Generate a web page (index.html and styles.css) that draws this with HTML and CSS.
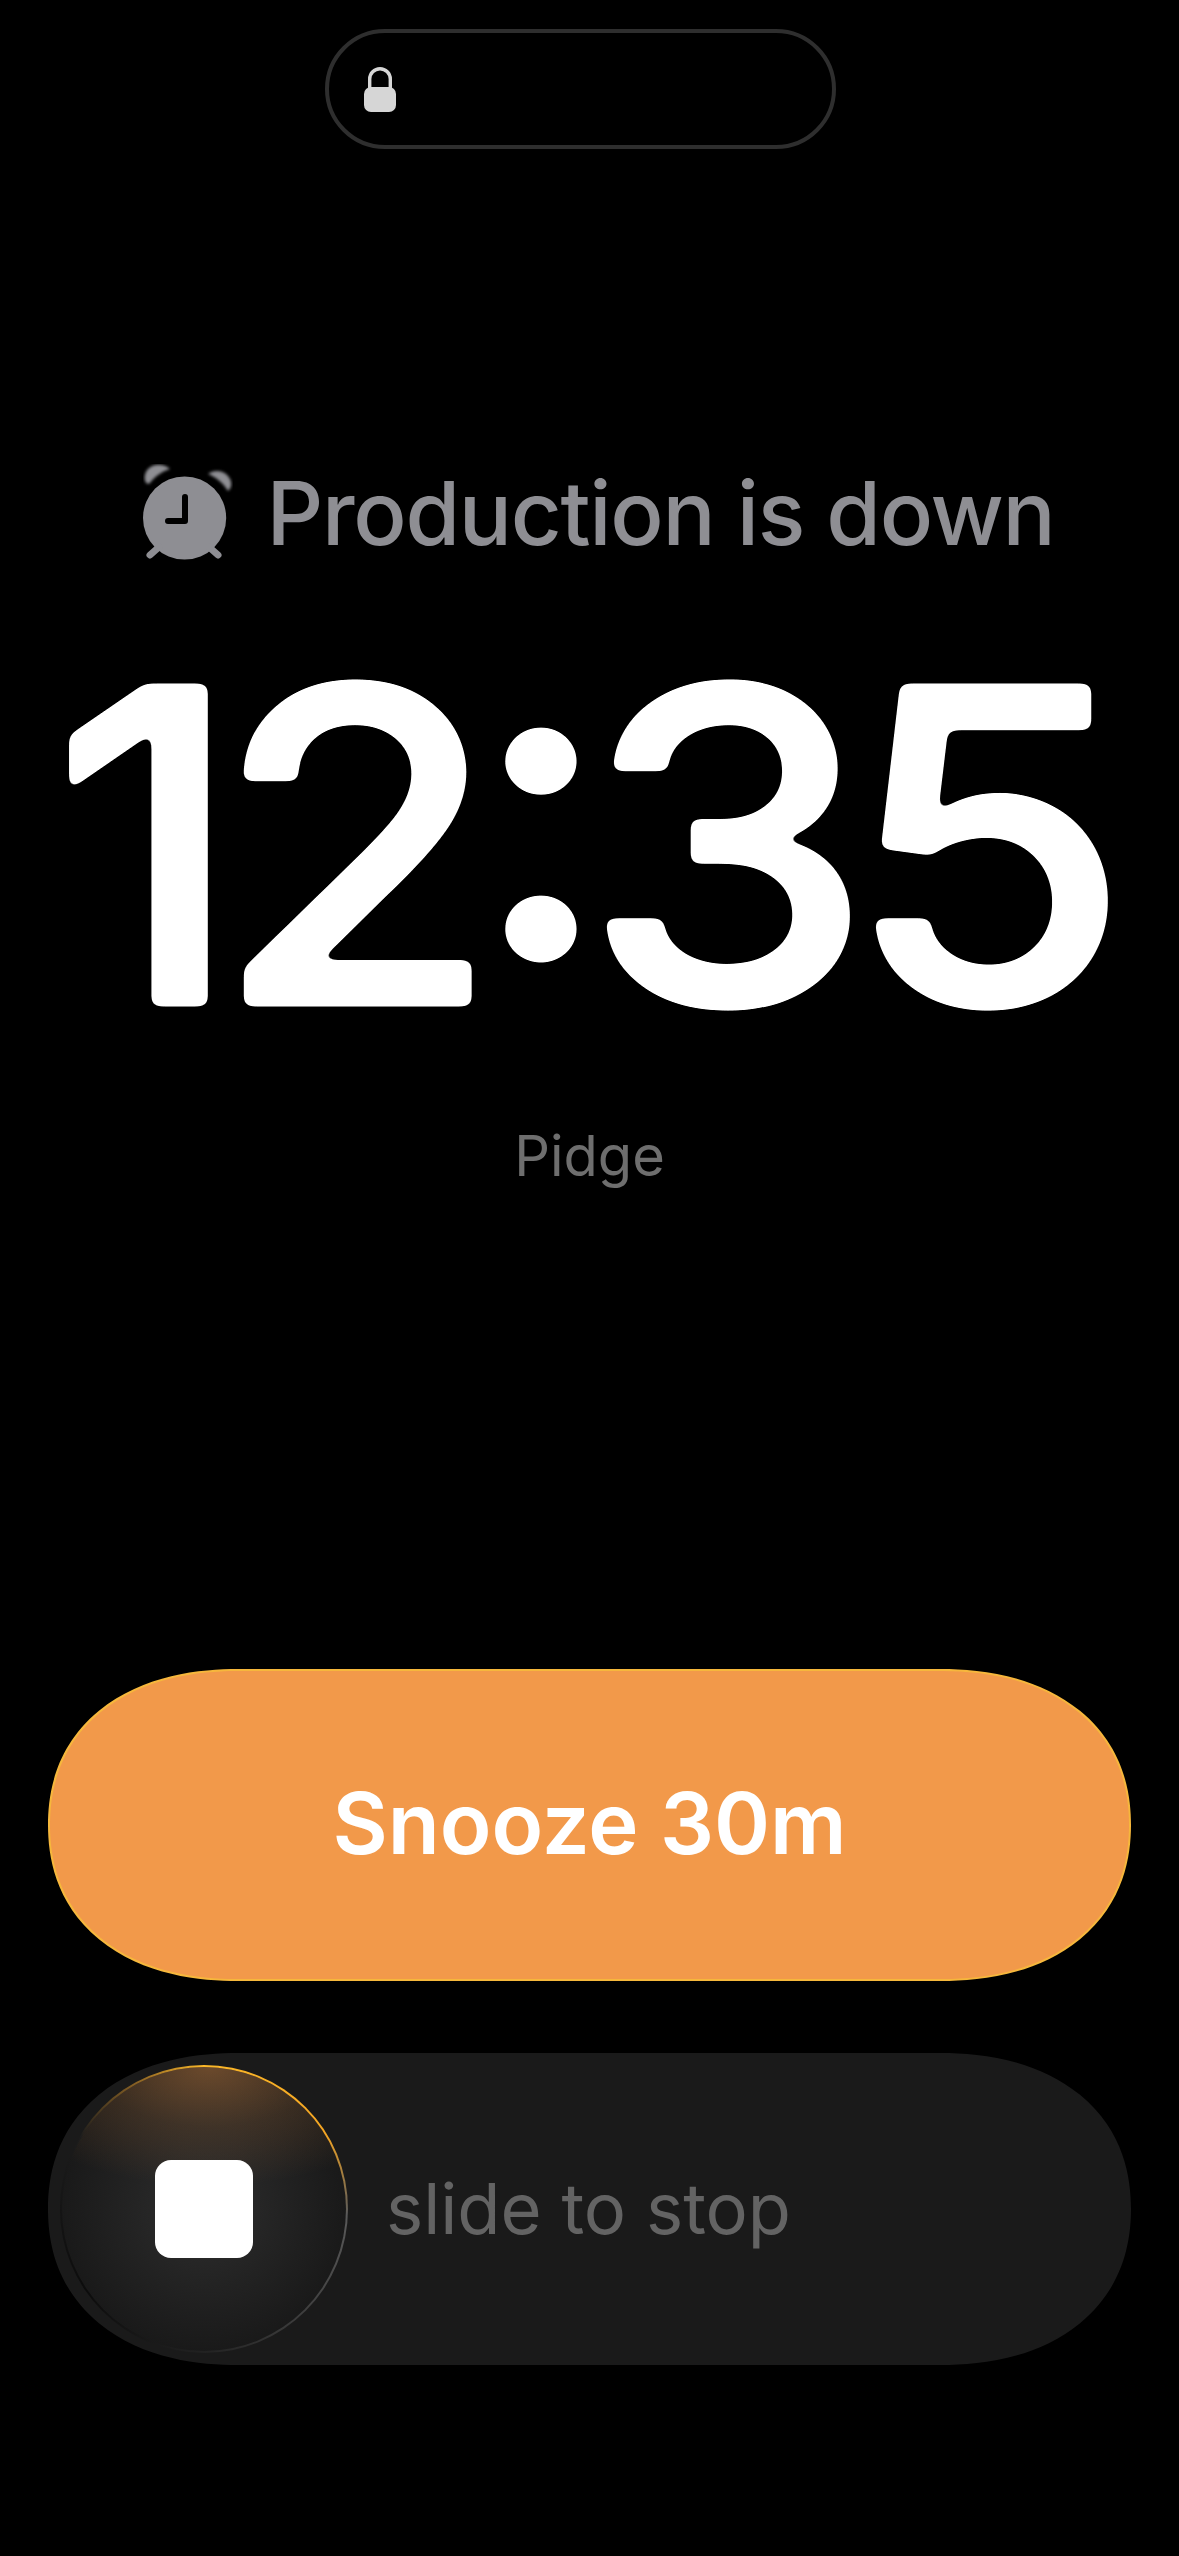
FILE: index.html
```html
<!DOCTYPE html>
<html lang="en">
<head>
  <meta charset="UTF-8">
  <meta name="viewport" content="width=device-width, initial-scale=1.0">
  <title>Alarm</title>
  <link rel="stylesheet" href="styles.css">
</head>
<body>
  <div class="island">
    <svg class="lock" viewBox="0 0 32 45" aria-hidden="true">
      <path d="M5.7 22V12a10.3 10.3 0 0 1 20.6 0v10" fill="none" stroke="#d6d6d6" stroke-width="3.4"/>
      <path d="M7 20h18a7 7 0 0 1 7 7v11a7 7 0 0 1-7 7H7a7 7 0 0 1-7-7V27a7 7 0 0 1 7-7z" fill="#d6d6d6"/>
    </svg>
  </div>

  <div class="title">
    <svg class="alarm" viewBox="0 0 90 98" aria-hidden="true">
      <defs>
        <filter id="soft"><feGaussianBlur stdDeviation="1.6"/></filter>
        <filter id="round-digits" x="-5%" y="-5%" width="110%" height="110%">
          <feGaussianBlur stdDeviation="5"/>
          <feComponentTransfer><feFuncA type="linear" slope="14" intercept="-6.5"/></feComponentTransfer>
        </filter>
      </defs>
      <g filter="url(#soft)" fill="#8e8e93">
        <path d="M5 20C0 18 1 9 5 5 10 0 20-1 27 5 20 7 12 12 7 19z"/>
        <path d="M65 10C70 6 78 6 83 10 88 14 91 22 85 27 81 20 73 13 65 10z"/>
      </g>
      <circle cx="41.6" cy="54" r="41.6" fill="#8e8e93"/>
      <path d="M42 33v24H25" fill="none" stroke="#000" stroke-width="6" stroke-linecap="round" stroke-linejoin="round"/>
      <path d="M16 83L7 91M66 83l9 8" fill="none" stroke="#8e8e93" stroke-width="7" stroke-linecap="round"/>
    </svg>
    <span>Production is down</span>
  </div>

  <div class="clock">12:35</div>
  <div class="label">Pidge</div>

  <div class="actions">
    <button class="snooze">Snooze 30m</button>
    <div class="slider">
      <div class="thumb"><div class="stop"></div></div>
      <span class="slide-text">slide to stop</span>
    </div>
  </div>
</body>
</html>
```
FILE: styles.css
```css
* { box-sizing: border-box; }

body {
  margin: 0;
  width: 1179px;
  height: 2556px;
  background: #000;
  font-family: Inter, "Noto Sans", sans-serif;
  display: flex;
  flex-direction: column;
  align-items: center;
  overflow: hidden;
}

.island {
  width: 511px;
  height: 120px;
  margin-top: 29px;
  margin-left: -18px;
  padding-left: 35px;
  border: 4px solid #2e2e2e;
  border-radius: 60px;
  display: flex;
  align-items: center;
}
.lock { width: 32px; height: 45px; }

.title {
  margin-top: 312px;
  margin-left: 18px;
  display: flex;
  align-items: center;
  gap: 34px;
  color: #8e8e93;
  font-size: 88.5px;
  font-weight: 500;
  letter-spacing: -1.3px;
  line-height: 104px;
}
.alarm { width: 90px; height: 98px; }

/* the installed Inter only steps from 500 to 600, so thicken 500 with a stroke */
.clock {
  margin-top: 30px;
  margin-left: -27px;
  color: #fff;
  font-size: 437px;
  font-weight: 500;
  font-feature-settings: "case";
  letter-spacing: -27px;
  line-height: 500px;
  -webkit-text-stroke: 5px #fff;
  transform: scaleX(1.06);
  filter: url(#round-digits);
}

.label {
  margin-top: 26px;
  color: #6e6e6e;
  font-size: 56px;
  line-height: 70px;
}

.actions {
  margin-top: 478px;
  width: 1083px;
  display: flex;
  flex-direction: column;
  gap: 72px;
}

.snooze, .slider {
  height: 312px;
  border-radius: 190px / 156px;
  corner-shape: superellipse(1.15);
}

.snooze {
  padding-bottom: 4px;
  border: 2px solid #f6b73c;
  background: #f2994a;
  color: #fff;
  font-family: inherit;
  font-size: 85px;
  font-weight: 600;
}

.slider {
  padding-left: 12px;
  background: #1a1a1a;
  display: flex;
  align-items: center;
  gap: 38px;
}

.thumb {
  width: 288px;
  height: 288px;
  border: 2px solid transparent;
  border-radius: 50%;
  background:
    radial-gradient(ellipse 80% 42% at 52% 0%, rgba(242, 153, 74, 0.38), rgba(242, 153, 74, 0.14) 50%, rgba(242, 153, 74, 0) 100%) padding-box,
    radial-gradient(circle at 50% 50%, #2e2e2e 0%, #191919 72%) padding-box,
    conic-gradient(#fbb829 0deg, #f5a623 58deg, #5a5a5a 92deg, #3c3c3c 140deg, #222 180deg, #0c0c0c 235deg, #1c1c1c 300deg, #8a6224 332deg, #fbb829 360deg) border-box;
  display: flex;
  align-items: center;
  justify-content: center;
}

.stop {
  width: 98px;
  height: 98px;
  border-radius: 16px;
  background: #fff;
}

.slide-text {
  color: #636363;
  font-size: 70.5px;
  margin-top: -2px;
}
```
